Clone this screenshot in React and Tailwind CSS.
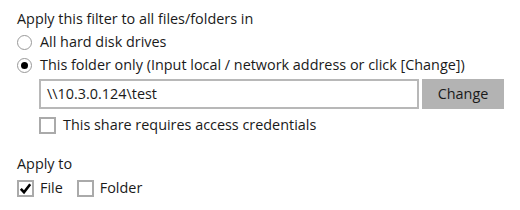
import React from "react";

function Radio({ checked }) {
  return (
    <span className="flex h-[15px] w-[15px] shrink-0 items-center justify-center rounded-full border border-[#999] bg-white">
      {checked && <span className="h-[7px] w-[7px] rounded-full bg-black" />}
    </span>
  );
}

function Check({ checked }) {
  return (
    <span className="flex h-[17px] w-[17px] shrink-0 items-center justify-center border-2 border-[#aaa] bg-white">
      {checked && (
        <svg width="13" height="13" viewBox="0 0 13 13">
          <path d="M1.8 6.8 L5 10.2 L11.2 2.2" fill="none" stroke="#000" strokeWidth="2.6" />
        </svg>
      )}
    </span>
  );
}

export default function App() {
  return (
    <div
      className="h-[210px] w-[520px] bg-white pl-[17px] pt-[9px] text-[14.4px] text-[#1a1a1a]"
      style={{ fontFamily: "'Open Sans', sans-serif" }}
    >
      <div className="leading-[20px]">Apply this filter to all files/folders in</div>
      <div className="mt-[3px] flex items-center gap-[8px] leading-[20px]">
        <Radio />
        <span>All hard disk drives</span>
      </div>
      <div className="mt-[3px] flex items-center gap-[8px] leading-[20px]">
        <Radio checked />
        <span>This folder only (Input local / network address or click [Change])</span>
      </div>
      <div className="ml-[22px] mt-[4px] flex gap-[3px]">
        <div className="flex h-[30px] w-[380px] items-center border-2 border-[#b8b8b8] px-[6px]">
          \\10.3.0.124\test
        </div>
        <div className="flex h-[30px] w-[82px] items-center justify-center bg-[#b3b3b3]">
          Change
        </div>
      </div>
      <div className="ml-[22px] mt-[6px] flex items-center gap-[7px] leading-[20px]">
        <Check />
        <span>This share requires access credentials</span>
      </div>
      <div className="mt-[19px] leading-[20px]">Apply to</div>
      <div className="mt-[4px] flex items-center leading-[20px]">
        <Check checked />
        <span className="ml-[6px]">File</span>
        <span className="ml-[14px]">
          <Check />
        </span>
        <span className="ml-[6px]">Folder</span>
      </div>
    </div>
  );
}
